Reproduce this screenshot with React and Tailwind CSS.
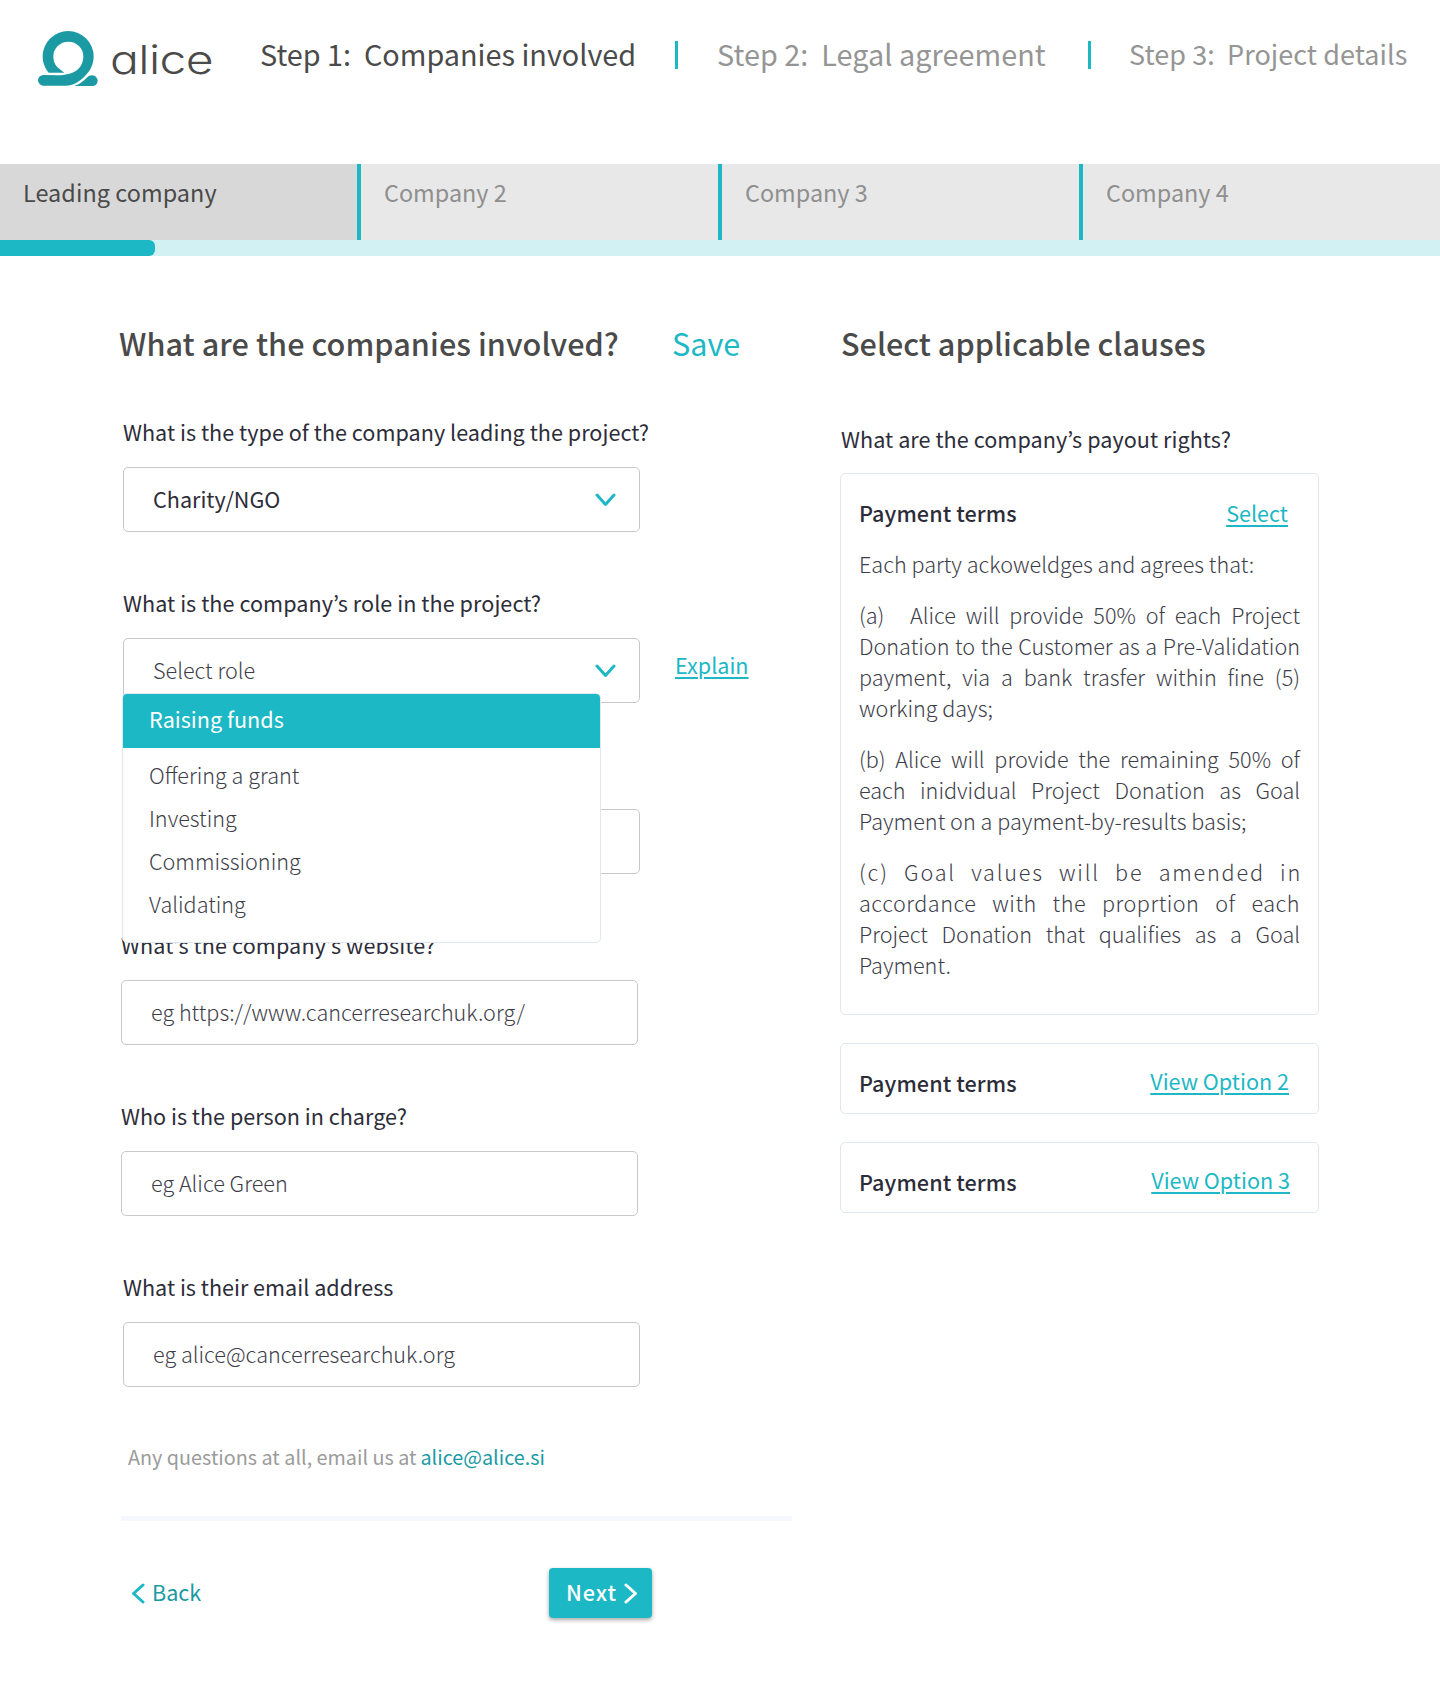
import React from "react";

const FONT = "font-['Noto_Sans_CJK_KR','Noto_Sans',sans-serif]";

function Logo() {
  return (
    <div className="flex h-[60px] items-start">
      <svg className="mt-[1px] h-[56px] w-[60px] shrink-0" viewBox="24 33 180 168" fill="#1b9aa4">
        <path d="M56 158 C45 146 38 128 38 109 A76.500 76 0 0 1 191 109 C191 134 180 155 162 171 C145 187 130 197 108 197 L40 197 A16 16 0 0 1 40 165 L84 166 C128 166 160 148 160 109 A45 44 0 0 0 70 109 C70 124 76 138 86 145 L103 158 Z" />
        <path d="M133 198 C149 192 160 183 170 173 Q176 166 187 166 A16 16 0 0 1 187 198 Z" />
      </svg>
      <span className="ml-[12px] origin-left scale-x-120 font-['Inter',sans-serif] text-[40px] leading-[60px] font-light tracking-[-0.5px] text-[#4a4a4a] [font-feature-settings:'cv11']">
        alice
      </span>
    </div>
  );
}

function Chevron({ dir, className, color = "#1db8c5" }) {
  const points = {
    down: "2,2 10.500,11.500 19,2",
    left: "12,2 2.500,10.500 12,19",
    right: "2,2 11.500,10.500 2,19",
  }[dir];
  const box = dir === "down" ? "0 0 21 14" : "0 0 14 21";
  return (
    <svg className={className} viewBox={box} fill="none" stroke={color} strokeWidth="3" strokeLinecap="round" strokeLinejoin="round">
      <polyline points={points} />
    </svg>
  );
}

function Tab({ label, active, className }) {
  return (
    <div
      className={`h-[76px] pt-[10px] text-[23.4px] leading-[36px] ${
        active ? "bg-[#d8d8d8] text-[#4a4a4a]" : "bg-[#e8e8e8] text-[#8f8f8f]"
      } ${className}`}
    >
      {label}
    </div>
  );
}

function Field({ label, value, filled, chevron, shift, spacing = "", children }) {
  return (
    <div className={`relative h-[171px] ${shift ? "mr-0.5 -ml-0.5" : ""}`}>
      <div className={`h-8 leading-8 whitespace-nowrap ${spacing}`}>{label}</div>
      <div className="mt-[19px] flex h-[65px] w-[517px] items-center justify-between rounded-[5px] border border-[#c8c8c8] bg-white pr-[23px] pb-[2px] pl-[29px]">
        <span className={filled ? "" : "font-light text-[#3d3d49]"}>{value}</span>
        {chevron && <Chevron dir="down" className="mt-[2px] h-[14px] w-[21px]" />}
      </div>
      {children}
    </div>
  );
}

function RoleMenu() {
  return (
    <div className="absolute top-[106px] -left-px z-10 h-[250px] w-[479px] overflow-hidden rounded-[5px] border border-[#e0e7f1] bg-white font-light text-[#3d3d49]">
      <div className="h-[54px] bg-[#1db8c5] pl-[26px] leading-[50px] font-normal text-white">Raising funds</div>
      <ul className="pt-[5px] pl-[26px] leading-[43px]">
        <li>Offering a grant</li>
        <li>Investing</li>
        <li>Commissioning</li>
        <li>Validating</li>
      </ul>
    </div>
  );
}

function Link({ children, className }) {
  return (
    <a className={`text-[#1db8c5] underline decoration-2 underline-offset-[3px] ${className}`}>{children}</a>
  );
}

function Paragraph({ lines }) {
  return (
    <div className="mt-5 text-[#3d3d49]">
      {lines.map(([text, cls], i) => (
        <div key={i} className={`whitespace-pre-wrap ${cls}`}>
          {text}
        </div>
      ))}
    </div>
  );
}

const J = "text-justify [text-align-last:justify]";

function OptionCard({ link, className }) {
  return (
    <div className="mt-7 flex h-[71px] items-start justify-between rounded-[5px] border border-[#e0e7f1] pt-[23px] pl-[18px]">
      <span className="font-medium tracking-[0.08px]">Payment terms</span>
      <Link className={`-mt-0.5 ${className}`}>{link}</Link>
    </div>
  );
}

export default function App() {
  return (
    <div className={`h-[1700px] w-[1440px] overflow-hidden bg-white text-[21.6px] leading-[31px] text-[#2d2d3a] ${FONT}`}>
      <header className="flex h-[164px] items-start pt-[30px] pl-[38px] text-[28.8px] leading-[44px] whitespace-pre text-[#959595]">
        <div className="w-[222px]">
          <Logo />
        </div>
        <div className="mt-[2px] w-[415px] text-[#4a4a4a]">Step 1:  Companies involved</div>
        <div className="mt-[11px] h-[28px] w-[3px] bg-[#1db8c5]" />
        <div className="mt-[2px] ml-[39px] w-[371px] tracking-[0.04px]">Step 2:  Legal agreement</div>
        <div className="mt-[11px] h-[28px] w-[3px] bg-[#1db8c5]" />
        <div className="mt-[2px] ml-[38px] text-[27px] tracking-[0.06px]">Step 3:  Project details</div>
      </header>

      <nav className="flex">
        <Tab label="Leading company" active className="w-[357px] pl-[23px] tracking-[0.06px]" />
        <Tab label="Company 2" className="w-[361px] border-l-4 border-[#1db8c5] pl-[23px]" />
        <Tab label="Company 3" className="w-[361px] border-l-4 border-[#1db8c5] pl-[23px]" />
        <Tab label="Company 4" className="w-[361px] border-l-4 border-[#1db8c5] pl-[23px]" />
      </nav>
      <div className="h-4 bg-[#d2f1f3]">
        <div className="h-4 w-[155px] rounded-r-[6px] bg-[#1db8c5]" />
      </div>

      <main className="flex pt-[65px] pl-[119px]">
        <section className="w-[722px]">
          <div className="flex text-[30.6px] leading-[44px]">
            <h1 className="w-[553px] font-medium tracking-[0.06px] text-[#4a4a4a]">What are the companies involved?</h1>
            <a className="text-[#1db8c5]">Save</a>
          </div>

          <div className="mt-[51px] pl-1">
            <Field label="What is the type of the company leading the project?" value="Charity/NGO" filled chevron spacing="tracking-[0.02px]" />
            <Field label="What is the company’s role in the project?" value="Select role" chevron spacing="tracking-[0.05px]">
              <Link className="absolute top-[62px] left-[552px]">Explain</Link>
              <RoleMenu />
            </Field>
            <Field />
            <Field label="What’s the company’s website?" value="eg https://www.cancerresearchuk.org/" shift spacing="tracking-[0.11px]" />
            <Field label="Who is the person in charge?" value="eg Alice Green" shift />
            <Field label="What is their email address" value="eg alice@cancerresearchuk.org" />
          </div>

          <p className="pl-[9px] text-[19.8px] leading-[30px] text-[#9b9b9b]">
            Any questions at all, email us at<a className="ml-1 text-[#1b9aa4]">alice@alice.si</a>
          </p>
          <div className="mt-[44px] ml-[2px] h-[5px] w-[671px] bg-[#f5f8fd]" />

          <div className="mt-[47px] flex h-[50px] items-center">
            <Chevron dir="left" className="ml-[12px] h-[21px] w-[14px]" />
            <a className="mb-[3px] ml-[7px] w-[397px] text-[#1b9aa4]">Back</a>
            <button className="flex h-[50px] w-[103px] items-center rounded-[4px] bg-[#1db8c5] pl-[17px] font-medium tracking-[1px] text-white shadow-[0_2px_4px_rgba(0,0,0,0.35)]">
              <span className="mb-[3px]">Next</span>
              <Chevron dir="right" color="#ffffff" className="ml-[7px] h-[21px] w-[14px]" />
            </button>
          </div>
        </section>

        <section className="w-[478px]">
          <h2 className="text-[30.6px] leading-[44px] font-medium text-[#4a4a4a]">Select applicable clauses</h2>
          <div className="mt-[58px] leading-8 tracking-[0.05px]">What are the company’s payout rights?</div>

          <article className="mt-[18px] -ml-px h-[542px] w-[479px] rounded-[5px] border border-[#e0e7f1] pt-[23px] pr-[18px] pl-[18px] font-light">
            <div className="flex justify-between">
              <span className="font-medium tracking-[0.08px]">Payment terms</span>
              <Link className="mr-[12px] font-normal">Select</Link>
            </div>
            <Paragraph lines={[["Each party ackoweldges and agrees that:", ""]]} />
            <Paragraph
              lines={[
                [<>(a)<span className="tracking-[-1.3px]">{"   "}</span>Alice will provide 50% of each Project</>, J],
                ["Donation to the Customer as a Pre-Validation", J],
                ["payment, via a bank trasfer within fine (5)", J],
                ["working days;", ""],
              ]}
            />
            <Paragraph
              lines={[
                ["(b) Alice will provide the remaining 50% of", J],
                ["each inidvidual Project Donation as Goal", J],
                ["Payment on a payment-by-results basis;", "tracking-[0.04px]"],
              ]}
            />
            <Paragraph
              lines={[
                ["(c) Goal values will be amended in", `${J} -mr-[2px] tracking-[1.8px]`],
                ["accordance with the proprtion of each", `${J} tracking-[0.5px]`],
                ["Project Donation that qualifies as a Goal", J],
                ["Payment.", ""],
              ]}
            />
          </article>

          <div className="-ml-px w-[479px]">
            <OptionCard link="View Option 2" className="mr-[29px]" />
            <OptionCard link="View Option 3" className="mr-[28px]" />
          </div>
        </section>
      </main>
    </div>
  );
}
